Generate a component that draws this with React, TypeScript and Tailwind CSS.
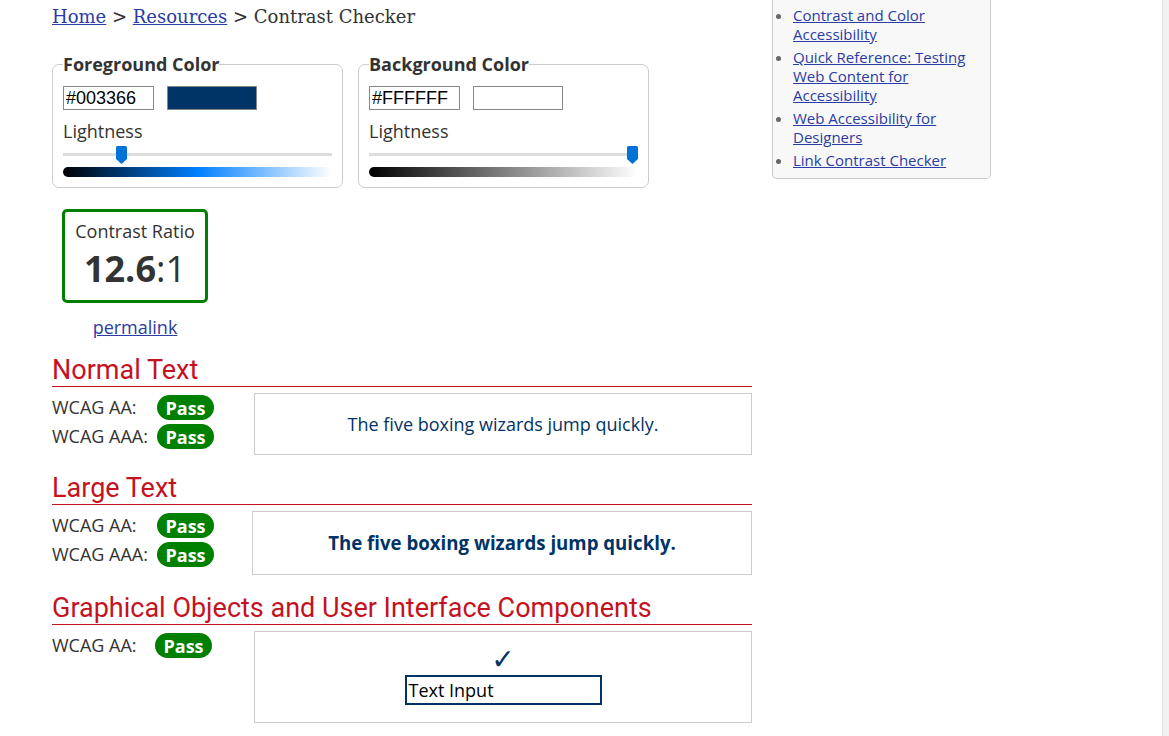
import React from "react";

const sans = "font-['Open_Sans',sans-serif]";

const Pass = () => (
  <span className="inline-flex items-center justify-center w-[57px] h-[25px] rounded-full bg-[#008000] text-white font-bold text-[18px] leading-none">
    Pass
  </span>
);

const ResultRow = ({ label, labelWidth }: { label: string; labelWidth: number }) => (
  <div className="flex items-center h-[29px]">
    <span className="text-[#333] text-[18px]" style={{ width: labelWidth }}>
      {label}
    </span>
    <Pass />
  </div>
);

const SectionHeading = ({ title }: { title: string }) => (
  <h2 className="font-['Roboto',sans-serif] text-[27px] leading-[32px] text-[#c5121f] border-b border-b-[#c5121f]">
    {title}
  </h2>
);

const Thumb = ({ left }: { left: number }) => (
  <svg
    width="11"
    height="18"
    viewBox="0 0 11 18"
    className="absolute top-[3px]"
    style={{ left }}
  >
    <path d="M0 1.5 Q0 0 1.5 0 H9.5 Q11 0 11 1.5 V13 L5.5 18 L0 13 Z" fill="#0272d6" />
  </svg>
);

const ColorPicker = ({
  title,
  hex,
  swatch,
  thumb,
  gradient,
}: {
  title: string;
  hex: string;
  swatch: string;
  thumb: number;
  gradient: string;
}) => (
  <fieldset className="w-[291px] border border-[#ccc] rounded-[7px] px-[10px] pt-0 pb-[10px]">
    <legend className="p-0 font-bold text-[18px] leading-[24px] text-[#333]">{title}</legend>
    <div className="flex gap-[13px] mt-[10px]">
      <input
        readOnly
        value={hex}
        className="w-[91px] h-[24px] border border-[#888] px-[2px] font-['Liberation_Sans',sans-serif] text-[18px] text-black bg-white"
      />
      <div className={`w-[90px] h-[24px] border border-[#888] ${swatch}`} />
    </div>
    <div className="mt-[10px] text-[18px] leading-[23px] text-[#333]">Lightness</div>
    <div className="relative h-[24px]">
      <div className="absolute left-0 right-0 top-[10px] h-[3px] bg-[#ddd]" />
      <Thumb left={thumb} />
    </div>
    <div className={`h-[10px] rounded-full ${gradient}`} />
  </fieldset>
);

export default function App() {
  return (
    <div className={`flex min-h-[736px] bg-white ${sans}`}>
      <div className="flex-1 flex gap-[20px] pl-[52px]">
        <main className="w-[700px] shrink-0">
          <div className="pt-[5px] font-['DejaVu_Serif',serif] text-[18px] leading-[24px] text-[#333]">
            <a href="#" className="text-[#2a3ca5] underline">Home</a> &gt;{" "}
            <a href="#" className="text-[#2a3ca5] underline">Resources</a> &gt; Contrast Checker
          </div>

          <div className="flex gap-[15px] mt-[23px]">
            <ColorPicker
              title="Foreground Color"
              hex="#003366"
              swatch="bg-[#003366]"
              thumb={53}
              gradient="bg-[linear-gradient(to_right,#000,hsl(210_100%_50%),#fff)]"
            />
            <ColorPicker
              title="Background Color"
              hex="#FFFFFF"
              swatch="bg-white"
              thumb={258}
              gradient="bg-[linear-gradient(to_right,#000,#fff)]"
            />
          </div>

          <div className="ml-[10px] mt-[21px] w-[146px]">
            <div className="h-[94px] border-[3px] border-[#008000] rounded-[5px] text-center text-[#333] pt-[7px]">
              <div className="text-[18px] leading-[24px]">Contrast Ratio</div>
              <div className="text-[36px] leading-[44px] mt-[4px]">
                <span className="font-bold">12.6</span>:1
              </div>
            </div>
            <div className="text-center mt-[12px] text-[18px] leading-[24px]">
              <a href="#" className="text-[#2a3ca5] underline">permalink</a>
            </div>
          </div>

          <div className="mt-[15px]">
            <SectionHeading title="Normal Text" />
            <div className="flex mt-[6px]">
              <div className="w-[202px]">
                <ResultRow label="WCAG AA:" labelWidth={105} />
                <ResultRow label="WCAG AAA:" labelWidth={105} />
              </div>
              <div className="flex-1 h-[62px] border border-[#ccc] flex items-center justify-center text-[18px] text-[#003366]">
                The five boxing wizards jump quickly.
              </div>
            </div>
          </div>

          <div className="mt-[17px]">
            <SectionHeading title="Large Text" />
            <div className="flex mt-[6px]">
              <div className="w-[200px]">
                <ResultRow label="WCAG AA:" labelWidth={105} />
                <ResultRow label="WCAG AAA:" labelWidth={105} />
              </div>
              <div className="flex-1 h-[64px] border border-[#ccc] flex items-center justify-center text-[18.66px] font-bold text-[#003366]">
                The five boxing wizards jump quickly.
              </div>
            </div>
          </div>

          <div className="mt-[17px]">
            <SectionHeading title="Graphical Objects and User Interface Components" />
            <div className="flex mt-[6px]">
              <div className="w-[202px]">
                <ResultRow label="WCAG AA:" labelWidth={103} />
              </div>
              <div className="flex-1 h-[92px] border border-[#ccc] flex flex-col items-center pt-[13px]">
                <span className="font-['DejaVu_Sans',sans-serif] text-[28px] leading-[30px] text-[#003366]">
                  ✓
                </span>
                <div className="w-[197px] h-[30px] border-2 border-[#003366] px-[2px] text-[18px] leading-[26px] text-black">
                  Text Input
                </div>
              </div>
            </div>
          </div>
        </main>

        <aside className="w-[219px] shrink-0 self-start">
          <ul className="bg-[#f8f8f8] border border-t-0 border-[#ccc] rounded-b-[5px] pl-[20px] pr-[10px] pt-[6px] pb-[8px] list-disc marker:text-[#666] text-[15px] leading-[19px]">
            <li className="mb-[4px]">
              <a href="#" className="text-[#2a3ca5] underline">Contrast and Color Accessibility</a>
            </li>
            <li className="mb-[4px]">
              <a href="#" className="text-[#2a3ca5] underline">Quick Reference: Testing Web Content for Accessibility</a>
            </li>
            <li className="mb-[4px]">
              <a href="#" className="text-[#2a3ca5] underline">Web Accessibility for Designers</a>
            </li>
            <li>
              <a href="#" className="text-[#2a3ca5] underline">Link Contrast Checker</a>
            </li>
          </ul>
        </aside>
      </div>
      <div className="w-[7px] shrink-0 border-l border-[#e2e2e2] bg-[#f1f1f1]" />
    </div>
  );
}
